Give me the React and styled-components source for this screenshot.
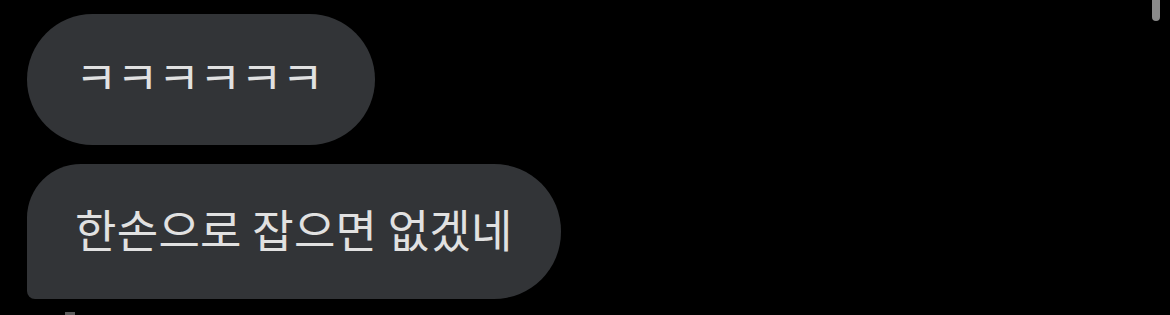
import styled, { createGlobalStyle } from "styled-components";

const Global = createGlobalStyle`
  html, body {
    margin: 0;
    padding: 0;
    background: #000;
    width: 1170px;
    height: 315px;
    overflow: hidden;
  }
`;

const Screen = styled.div`
  position: relative;
  width: 1170px;
  height: 315px;
  background: #000;
  font-family: "Noto Sans CJK KR", "Noto Sans", sans-serif;
`;

const Thread = styled.div`
  display: flex;
  flex-direction: column;
  align-items: flex-start;
  gap: 19px;
  padding: 14px 0 0 27px;
`;

const Bubble = styled.div`
  box-sizing: border-box;
  height: ${(p) => p.$h}px;
  padding: 0 ${(p) => p.$pr}px ${(p) => p.$pb || 0}px ${(p) => p.$pl}px;
  display: flex;
  align-items: center;
  background: #323437;
  color: #e1e1e1;
  font-size: ${(p) => p.$size}px;
  letter-spacing: ${(p) => p.$ls || 0}px;
  line-height: 1;
  border-radius: ${(p) => p.$radius};
`;

const ScrollThumb = styled.div`
  position: absolute;
  top: 0;
  right: 10px;
  width: 8px;
  height: 21px;
  background: #8a8a8a;
  border-radius: 0 0 4px 4px;
`;

const NextMark = styled.div`
  width: 10px;
  height: 3px;
  margin: 13px 0 0 65px;
  background: #5a5a5a;
`;

export default function App() {
  return (
    <Screen>
      <Global />
      <Thread>
        <Bubble $h={131} $pl={48} $pr={52} $size={46} $ls={-1} $pb={12} $radius="66px">
          ㅋㅋㅋㅋㅋㅋ
        </Bubble>
        <Bubble $h={135} $pl={48} $pr={48} $size={45} $ls={0.3} $pb={6} $radius="54px 67px 67px 8px">
          한손으로 잡으면 없겠네
        </Bubble>
      </Thread>
      <NextMark />
      <ScrollThumb />
    </Screen>
  );
}
